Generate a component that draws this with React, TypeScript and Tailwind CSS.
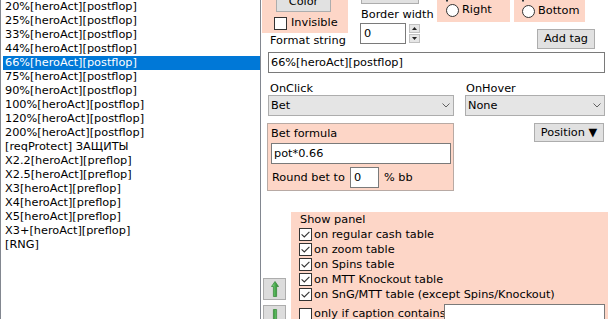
import React from 'react';

const listItems = [
  '20%[heroAct][postflop]',
  '25%[heroAct][postflop]',
  '33%[heroAct][postflop]',
  '44%[heroAct][postflop]',
  '66%[heroAct][postflop]',
  '75%[heroAct][postflop]',
  '90%[heroAct][postflop]',
  '100%[heroAct][postflop]',
  '120%[heroAct][postflop]',
  '200%[heroAct][postflop]',
  '[reqProtect] ЗАЩИТЫ',
  'X2.2[heroAct][preflop]',
  'X2.5[heroAct][preflop]',
  'X3[heroAct][preflop]',
  'X4[heroAct][preflop]',
  'X5[heroAct][preflop]',
  'X3+[heroAct][preflop]',
  '[RNG]',
];

const showOn = [
  'on regular cash table',
  'on zoom table',
  'on Spins table',
  'on MTT Knockout table',
  'on SnG/MTT table (except Spins/Knockout)',
];

const Checkbox = ({ checked }: { checked?: boolean }) => (
  <span className="w-[13px] h-[13px] shrink-0 border border-[#333333] bg-white flex items-center justify-center">
    {checked && (
      <svg width="9" height="7" viewBox="0 0 9 7">
        <path d="M0.6 3.4 L3.3 6 L8.4 0.8" fill="none" stroke="#333333" strokeWidth="1.1" />
      </svg>
    )}
  </span>
);

const Radio = () => (
  <span className="w-[13px] h-[13px] shrink-0 rounded-full border border-[#333333] bg-white" />
);

const Chevron = () => (
  <svg width="8" height="5" viewBox="0 0 8 5" className="shrink-0">
    <polyline points="0.5,0.5 4,4 7.5,0.5" fill="none" stroke="#606060" strokeWidth="1" />
  </svg>
);

const GreenArrow = ({ down }: { down?: boolean }) => (
  <svg width="8" height="16" viewBox="0 0 8 16" className={down ? 'rotate-180' : ''}>
    <defs>
      <linearGradient id="ga" x1="0" x2="1" y1="0" y2="0">
        <stop offset="0" stopColor="#9be39b" />
        <stop offset="0.5" stopColor="#4caf50" />
        <stop offset="1" stopColor="#2e7d32" />
      </linearGradient>
    </defs>
    <path d="M4 0.5 L7.5 5.5 L5.6 5.5 L5.6 15.5 L2.4 15.5 L2.4 5.5 L0.5 5.5 Z" fill="url(#ga)" stroke="#3b8a3e" strokeWidth="0.8" />
  </svg>
);

const btn = 'bg-[#e1e1e1] border border-[#adadad] flex items-center justify-center';
const input = 'bg-white border border-[#7a7a7a] flex items-center';
const combo = 'bg-[#e5e5e5] border border-[#adadad] flex items-center justify-between pl-[2px] pr-[3px]';

export default function App() {
  return (
    <div className="w-[608px] h-[319px] overflow-hidden bg-white flex text-black font-['DejaVu_Sans',sans-serif] text-[11.3px] leading-[14px]">
      {/* list */}
      <div className="w-[261px] h-full shrink-0 border-l border-r border-[#828790] pl-[2px]">
        {listItems.map((item, i) => (
          <div
            key={item}
            className={`h-[14px] pl-[2px] whitespace-nowrap ${i === 4 ? 'bg-[#0078d7] text-white' : ''}`}
          >
            {item}
          </div>
        ))}
      </div>

      {/* editor */}
      <div className="flex-1 flex flex-col">
        <div className="flex h-[52px] items-start shrink-0">
          <div className="w-[99px] shrink-0 flex flex-col">
            <div className="ml-[1px] w-[86px] h-[33px] bg-[#fdd6c7] flex flex-col overflow-hidden">
              <div className={`${btn} ml-[14px] w-[55px] h-[20px] -mt-[8px] shrink-0`}>Color</div>
              <div className="flex items-center ml-[12px] mt-[4px]">
                <Checkbox />
                <span className="ml-[4px]">Invisible</span>
              </div>
            </div>
            <div className="pl-[9px] mt-[1px] whitespace-nowrap">Format string</div>
          </div>

          <div className="w-[77px] shrink-0 flex flex-col">
            <div className={`${btn} ml-[1px] w-[58px] h-[22px] -mt-[18px] shrink-0`} />
            <div className="pl-[1px] mt-[4px] whitespace-nowrap">Border width</div>
            <div className="flex items-start mt-[1px]">
              <div className={`${input} w-[46px] h-[21px] pl-[3px]`}>0</div>
              <div className="flex flex-col gap-[1px] ml-[3px] mt-[1px]">
                <div className="w-[11px] h-[9px] bg-[#e6e6e6] border border-[#c0c0c0] flex items-center justify-center">
                  <svg width="5" height="3" viewBox="0 0 5 3"><polygon points="2.5,0 5,3 0,3" fill="#222" /></svg>
                </div>
                <div className="w-[11px] h-[9px] bg-[#e6e6e6] border border-[#c0c0c0] flex items-center justify-center">
                  <svg width="5" height="3" viewBox="0 0 5 3"><polygon points="0,0 5,0 2.5,3" fill="#222" /></svg>
                </div>
              </div>
            </div>
          </div>

          <div className="flex flex-col">
            <div className="flex">
              <div className="w-[73px] h-[22px] bg-[#fdd6c7] flex flex-col overflow-hidden">
                <div className="-mt-[12px] ml-[9px] h-[13px] shrink-0">
                  <Radio />
                </div>
                <div className="flex items-center ml-[9px] mt-[2px]">
                  <Radio />
                  <span className="ml-[3px]">Right</span>
                </div>
              </div>
              <div className="ml-[4px] w-[71px] h-[22px] bg-[#fdd6c7] flex flex-col overflow-hidden">
                <div className="-mt-[12px] ml-[8px] h-[13px] shrink-0">
                  <Radio />
                </div>
                <div className="flex items-center ml-[8px] mt-[3px]">
                  <Radio />
                  <span className="ml-[3px]">Bottom</span>
                </div>
              </div>
            </div>
            <div className={`${btn} ml-[100px] mt-[7px] w-[58px] h-[20px]`}>Add tag</div>
          </div>
        </div>

        <div className={`${input} ml-[7px] w-[337px] h-[21px] pl-[2px] shrink-0`}>66%[heroAct][postflop]</div>

        <div className="flex mt-[9px] shrink-0">
          <div className="ml-[7px] w-[186px] flex flex-col">
            <div className="pl-[2px] h-[13px]">OnClick</div>
            <div className={`${combo} h-[21px]`}>
              <span>Bet</span>
              <Chevron />
            </div>
          </div>
          <div className="ml-[11px] w-[140px] flex flex-col">
            <div className="pl-[1px] h-[13px]">OnHover</div>
            <div className={`${combo} h-[21px]`}>
              <span>None</span>
              <Chevron />
            </div>
          </div>
        </div>

        <div className="flex items-start mt-[7px] shrink-0">
          <div className="ml-[6px] w-[187px] h-[68px] bg-[#fdd6c7] border border-[#b8aaa4] flex flex-col pl-[3px] pt-[3px]">
            <div>Bet formula</div>
            <div className={`${input} mt-[2px] w-[180px] h-[21px] pl-[2px]`}>pot*0.66</div>
            <div className="flex items-center mt-[3px]">
              <span className="w-[79px] whitespace-nowrap pl-[1px]">Round bet to</span>
              <div className={`${input} w-[29px] h-[21px] pl-[3px]`}>0</div>
              <span className="ml-[5px]">% bb</span>
            </div>
          </div>
          <div className={`${btn} ml-[80px] w-[70px] h-[19px]`}>Position ▼</div>
        </div>

        <div className="flex items-start flex-1">
          <div className="ml-[2px] w-[23px] shrink-0 flex flex-col mt-[87px]">
            <div className="h-[22px] bg-[#dcdcdc] border border-[#adadad] flex items-center justify-center">
              <GreenArrow />
            </div>
            <div className="h-[22px] mt-[5px] bg-[#dcdcdc] border border-[#adadad] flex justify-center pt-[3px]">
              <GreenArrow down />
            </div>
          </div>
          <div className="ml-[5px] mt-[21px] flex-1 h-[120px] bg-[#fdd6c7] flex flex-col pl-[8px]">
            <div className="pl-[1px] mt-[1px]">Show panel</div>
            {showOn.map((s) => (
              <div key={s} className="h-[15px] flex items-center whitespace-nowrap">
                <Checkbox checked />
                <span className="ml-[2px]">{s}</span>
              </div>
            ))}
            <div className="h-[22px] mt-[1px] flex items-center whitespace-nowrap">
              <Checkbox />
              <span className="ml-[2px] w-[130px]">only if caption contains</span>
              <div className={`${input} w-[161px] h-[21px] ml-0 self-start mt-[1px]`} />
            </div>
          </div>
        </div>
      </div>
    </div>
  );
}
